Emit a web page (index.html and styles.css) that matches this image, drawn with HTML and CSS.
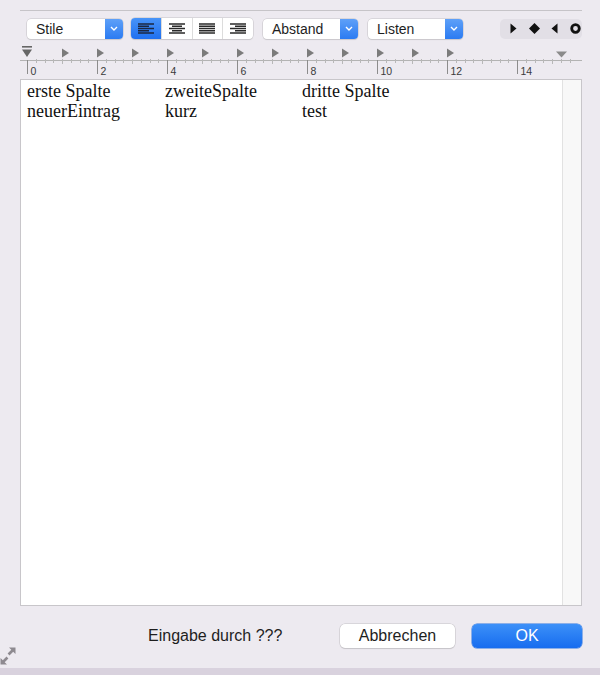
FILE: index.html
```html
<!DOCTYPE html>
<html lang="de">
<head>
<meta charset="utf-8">
<title>Eingabe</title>
<link rel="stylesheet" href="styles.css">
</head>
<body>
<div class="window">
  <div class="top-line"></div>

  <div class="toolbar">
    <div class="popup popup-stile">
      <span class="popup-label">Stile</span>
      <span class="popup-arrow"><svg width="8" height="5" viewBox="0 0 8 5"><path d="M1 1 L4 4 L7 1" fill="none" stroke="#fff" stroke-width="1.4"/></svg></span>
    </div>

    <div class="segmented">
      <div class="seg seg-on">
        <svg width="16" height="11" viewBox="0 0 16 11"><g stroke="#1b2740" stroke-width="1.3"><path d="M0 1H16M0 3.25H11M0 5.5H16M0 7.75H11M0 10H16"/></g></svg>
      </div>
      <div class="seg">
        <svg width="16" height="11" viewBox="0 0 16 11"><g stroke="#2a2a2a" stroke-width="1.3"><path d="M0 1H16M3 3.25H13M0 5.5H16M3 7.75H13M0 10H16"/></g></svg>
      </div>
      <div class="seg">
        <svg width="16" height="11" viewBox="0 0 16 11"><g stroke="#2a2a2a" stroke-width="1.3"><path d="M0 1H16M0 3.25H16M0 5.5H16M0 7.75H16M0 10H16"/></g></svg>
      </div>
      <div class="seg">
        <svg width="16" height="11" viewBox="0 0 16 11"><g stroke="#2a2a2a" stroke-width="1.3"><path d="M0 1H16M5 3.25H16M0 5.5H16M5 7.75H16M0 10H16"/></g></svg>
      </div>
    </div>

    <div class="popup popup-abstand">
      <span class="popup-label">Abstand</span>
      <span class="popup-arrow"><svg width="8" height="5" viewBox="0 0 8 5"><path d="M1 1 L4 4 L7 1" fill="none" stroke="#fff" stroke-width="1.4"/></svg></span>
    </div>

    <div class="popup popup-listen">
      <span class="popup-label">Listen</span>
      <span class="popup-arrow"><svg width="8" height="5" viewBox="0 0 8 5"><path d="M1 1 L4 4 L7 1" fill="none" stroke="#fff" stroke-width="1.4"/></svg></span>
    </div>

    <div class="tabkinds">
      <svg width="7" height="11" viewBox="0 0 7 11"><path d="M0.5 0.5 L6.5 5.5 L0.5 10.5Z" fill="#111"/></svg>
      <svg width="11" height="11" viewBox="0 0 11 11"><path d="M5.5 0 L11 5.5 L5.5 11 L0 5.5Z" fill="#111"/></svg>
      <svg width="7" height="11" viewBox="0 0 7 11"><path d="M6.5 0.5 L0.5 5.5 L6.5 10.5Z" fill="#111"/></svg>
      <svg width="11" height="11" viewBox="0 0 11 11"><circle cx="5.5" cy="5.5" r="3.8" fill="none" stroke="#111" stroke-width="2.8"/></svg>
    </div>
  </div>

  <div class="ruler">
    <svg width="562" height="39" viewBox="0 0 562 39">
      <line x1="0" y1="20.5" x2="562" y2="20.5" stroke="#b3b3b3" stroke-width="1"/>
      <g stroke="#b8b8b8" stroke-width="1" id="ticks"></g>
      <g id="major" stroke="#8c8c8c" stroke-width="1"></g>
      <g id="nums" font-family="'Liberation Sans', Arial, sans-serif" font-size="10.5" fill="#3a3a3a"></g>
      <g id="tabs" fill="#7b7b7b"></g>
      <g fill="#666">
        <rect x="2" y="6" width="10" height="1.6"/>
        <path d="M2 9.5 H12 L7 17Z"/>
      </g>
      <path d="M536 11.5 H547 L541.5 17.5Z" fill="#8b8b8b"/>
    </svg>
  </div>

  <div class="editor">
    <div class="doc">
      <div class="line"><span class="c1">erste Spalte</span><span class="c2">zweiteSpalte</span><span class="c3">dritte Spalte</span></div>
      <div class="line"><span class="c1">neuerEintrag</span><span class="c2">kurz</span><span class="c3">test</span></div>
    </div>
    <div class="scrolltrack"></div>
  </div>

  <div class="footer">
    <svg class="grip" width="16" height="18" viewBox="0 0 16 18">
      <g fill="#8e8a90">
        <path d="M15.5 0.5 V7 L13.2 4.7 L9.5 8.4 L7.6 6.5 L11.3 2.8 L9 0.5Z"/>
        <path d="M0.5 17.5 V11 L2.8 13.3 L6.5 9.6 L8.4 11.5 L4.7 15.2 L7 17.5Z"/>
      </g>
    </svg>
    <span class="prompt">Eingabe durch ???</span>
    <div class="buttons">
      <button class="btn btn-cancel">Abbrechen</button>
      <button class="btn btn-ok">OK</button>
    </div>
  </div>
  <div class="bottom-strip"></div>
</div>
<script src="ruler.js"></script>
</body>
</html>
```

FILE: ruler.js
```js
(function () {
  var NS = "http://www.w3.org/2000/svg";
  var ticks = document.getElementById("ticks");
  var major = document.getElementById("major");
  var nums = document.getElementById("nums");
  var tabs = document.getElementById("tabs");
  var origin = 7, cm = 35;
  for (var q = 1; q <= 62; q++) {
    var x = origin + q * cm / 4;
    if (x > 552) break;
    var px = Math.round(x) + 0.5;
    if (q % 8 === 0) continue;
    var len = (q % 4 === 0) ? 4 : 3;
    var l = document.createElementNS(NS, "line");
    l.setAttribute("x1", px); l.setAttribute("x2", px);
    l.setAttribute("y1", 19); l.setAttribute("y2", 20 + len);
    ticks.appendChild(l);
  }
  for (var c = 0; c <= 14; c += 2) {
    var mx = Math.round(origin + c * cm) + 0.5;
    var m = document.createElementNS(NS, "line");
    m.setAttribute("x1", mx); m.setAttribute("x2", mx);
    m.setAttribute("y1", 20); m.setAttribute("y2", 34);
    major.appendChild(m);
    var t = document.createElementNS(NS, "text");
    t.setAttribute("x", mx + 3); t.setAttribute("y", 34.5);
    t.textContent = String(c);
    nums.appendChild(t);
  }
  for (var k = 1; k <= 12; k++) {
    var tx = Math.round(origin + k * cm);
    var p = document.createElementNS(NS, "path");
    p.setAttribute("d", "M" + tx + " 8.5 L" + (tx + 7) + " 13 L" + tx + " 17.5Z");
    tabs.appendChild(p);
  }
})();
```

FILE: styles.css
```css
html, body {
  margin: 0;
  padding: 0;
}
body {
  background: #edeaf0;
  font-family: "Liberation Sans", Arial, sans-serif;
  color: #222;
  width: 600px;
  height: 675px;
  overflow: hidden;
}
.window {
  display: flex;
  flex-direction: column;
  height: 675px;
}
.top-line {
  height: 1px;
  background: #c6c4c8;
  margin: 10px 18px 0 20px;
}
.toolbar {
  display: flex;
  align-items: center;
  margin: 7px 18px 0 20px;
  padding-left: 7px;
  height: 21px;
}
.popup {
  display: flex;
  align-items: stretch;
  height: 20px;
  background: #fff;
  border-radius: 4px;
  box-shadow: 0 0 0 0.5px #c4c1c6, 0 1px 1px rgba(0,0,0,0.12);
  box-sizing: border-box;
}
.popup-label {
  flex: 1;
  font-size: 14px;
  line-height: 20px;
  padding-left: 9px;
  color: #1e1e1e;
}
.popup-arrow {
  width: 18px;
  display: flex;
  align-items: center;
  justify-content: center;
  background: linear-gradient(#5ea0f8, #2b7bf2);
  border-radius: 0 4px 4px 0;
}
.popup-stile { width: 96px; }
.popup-abstand { width: 95px; margin-left: 10px; }
.popup-listen { width: 95px; margin-left: 10px; }
.segmented {
  display: flex;
  width: 122px;
  height: 21px;
  margin-left: 8px;
  background: #fff;
  border-radius: 4px;
  box-shadow: 0 0 0 0.5px #c4c1c6, 0 1px 1px rgba(0,0,0,0.12);
  overflow: hidden;
}
.seg {
  flex: 1;
  display: flex;
  align-items: center;
  justify-content: center;
  border-left: 1px solid #dcdcdc;
}
.seg:first-child { border-left: none; }
.seg-on {
  background: linear-gradient(#4894f8, #1f70f0);
}
.tabkinds {
  margin-left: auto;
  width: 82px;
  height: 20px;
  background: #e2dfe6;
  border-radius: 5px;
  display: flex;
  align-items: center;
  justify-content: space-between;
  padding: 0 1px 0 10px;
  box-sizing: border-box;
}
.ruler {
  margin: 1px 18px 0 20px;
  height: 39px;
}
.ruler svg { display: block; }
.editor {
  margin: 0 18px 0 20px;
  height: 527px;
  box-sizing: border-box;
  background: #fff;
  border: 1px solid #c8c6ca;
  display: flex;
}
.doc {
  flex: 1;
  padding: 1px 0 0 6px;
  font-family: "Liberation Serif", "Times New Roman", serif;
  font-size: 18px;
  line-height: 20px;
  color: #111;
}
.line { display: flex; white-space: nowrap; }
.c1 { width: 138px; }
.c2 { width: 137px; }
.scrolltrack {
  width: 18px;
  background: #f8f8f8;
  border-left: 1px solid #e2e2e2;
}
.footer {
  display: flex;
  align-items: flex-start;
  height: 62px;
  box-sizing: border-box;
  padding: 18px 18px 0 0;
}
.grip {
  align-self: flex-end;
  margin-bottom: 3px;
  flex: none;
}
.prompt {
  font-size: 16px;
  color: #1e1e1e;
  margin-left: 132px;
  height: 24px;
  line-height: 24px;
}
.buttons {
  margin-left: auto;
  display: flex;
  gap: 17px;
}
.btn {
  height: 24px;
  border: none;
  border-radius: 5px;
  font-family: "Liberation Sans", Arial, sans-serif;
  font-size: 16px;
  padding: 0;
  margin: 0;
}
.btn-cancel {
  width: 115px;
  background: #fff;
  color: #1e1e1e;
  box-shadow: 0 0 0 0.5px #c4c1c6, 0 1px 1px rgba(0,0,0,0.15);
}
.btn-ok {
  width: 110px;
  color: #fff;
  background: linear-gradient(#3c90f8, #176cef);
  box-shadow: 0 0 0 0.5px #2d74e0;
}
.bottom-strip {
  flex: 1;
  background: #d9d2de;
}
```
